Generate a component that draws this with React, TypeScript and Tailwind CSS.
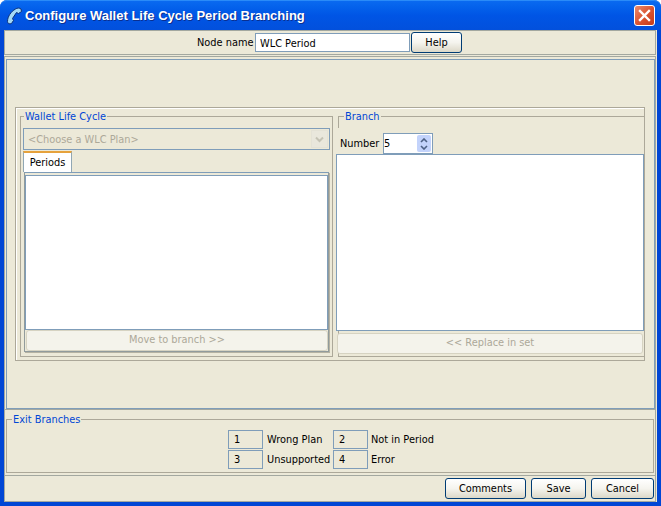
const ui = { fontFamily: '"DejaVu Sans", "Liberation Sans", sans-serif' }

const PushButton = ({ label, className }: { label: string; className: string }) => {
  return (
    <button className={"block h-[21px] rounded-[3px] border border-[#003c74] bg-gradient-to-b from-white via-[#f5f4ee] to-[#dcd8c8] pt-[2px] text-[9.8px] text-black " + className}>
      {label}
    </button>
  )
}

const DisabledButton = ({ label, className }: { label: string; className: string }) => {
  return (
    <button disabled className={"block h-[21px] rounded-[3px] border border-[#d6d3c2] bg-[#f4f3eb] text-[9.8px] text-[#aca899] " + className}>
      {label}
    </button>
  )
}

const Legend = ({ label, className }: { label: string; className: string }) => {
  return <legend className={"h-[14px] px-[1px] pt-[1px] text-[9.8px] leading-[14px] text-[#0046d5] " + className}>{label}</legend>
}

const ExitCell = ({ n }: { n: number }) => {
  return (
    <div className="flex h-[19px] w-[35px] items-center border border-[#7f9db9] pl-[5px] pt-[2px] text-[9.8px] text-black">{n}</div>
  )
}

const PhoneIcon = () => {
  return (
    <svg width="18" height="18" viewBox="0 0 18 18" className="shrink-0">
      <path
        d="M9.5 2 C11 0.8 14 0.8 15 2 L15.5 4.5 L12.5 6.5 L10.5 5.5 L6.5 11.5 L7.5 13.5 L5.5 16.5 C3.5 17.5 1.5 16.5 1.5 14.5 C1.5 9.5 5 4.5 9.5 2 Z"
        fill="#a4daf7"
        stroke="#0b2f7a"
        strokeWidth="1"
      />
    </svg>
  )
}

const CloseButton = () => {
  return (
    <div className="flex h-[21px] w-[21px] items-center justify-center rounded-[3px] border border-white bg-gradient-to-br from-[#e88a6c] via-[#db5532] to-[#c43a17]">
      <svg width="13" height="13" viewBox="0 0 13 13">
        <path d="M2 2 L11 11 M11 2 L2 11" stroke="#fff" strokeWidth="2.4" strokeLinecap="square" />
      </svg>
    </div>
  )
}

const App = () => {
  return (
    <div className="h-[506px] w-[661px] overflow-hidden bg-white" style={ui}>
      <div className="flex h-full flex-col rounded-t-[7px] bg-[#0046d5]">
        {/* title bar */}
        <div className="flex h-[30px] shrink-0 items-center rounded-t-[7px] border-t border-[#2a8bf8] bg-gradient-to-b from-[#0a6af0] via-[#0055e5] to-[#0250dc] pl-[6px] pr-[6px]">
          <PhoneIcon />
          <span className="ml-[1px] flex-1 text-[13px] font-bold text-white [font-family:'Liberation_Sans',sans-serif] [text-shadow:1px_1px_0_#0a2f90]">
            Configure Wallet Life Cycle Period Branching
          </span>
          <CloseButton />
        </div>

        <div className="mx-[4px] mb-[4px] flex flex-1 flex-col bg-[#ece9d8]">
          {/* node name */}
          <div className="flex h-[25px] w-[652px] shrink-0 items-center border border-[#a3a8a0]">
            <span className="ml-[192px] w-[55px] whitespace-nowrap pt-[1px] text-[9.8px] text-black">Node name</span>
            <input
              readOnly
              value="WLC Period"
              className="ml-[3px] h-[19px] w-[155px] border border-[#7f9db9] bg-white px-[4px] pt-[1px] text-[9.8px] text-black outline-none"
            />
            <PushButton label="Help" className="ml-[1px] w-[51px]" />
          </div>

          {/* main area */}
          <div className="mt-[1px] h-[353px] w-[652px] shrink-0 border-l border-r border-t border-[#a3a8a0] pl-[1px] pt-[2px]">
            <div className="h-[350px] w-[649px] border border-[#7f9db9] pl-[8px] pt-[47px]">
              <div className="flex h-[254px] w-[630px] border border-[#aca899] pl-[4px] pt-[1px] shadow-[inset_1px_1px_0_#fff]">
                <fieldset className="h-[248px] w-[313px] shrink-0 border border-[#aca899]">
                  <Legend label="Wallet Life Cycle" className="ml-[3px]" />
                  <div className="ml-[2px] mt-[5px] flex h-[22px] w-[307px] items-center border border-[#7f9db9] bg-[#ece9d8] pl-[4px] text-[9.8px] text-[#aca899]">
                    <span className="flex-1 pt-[2px]">&lt;Choose a WLC Plan&gt;</span>
                    <div className="mr-[1px] flex h-[18px] w-[17px] items-center justify-center border border-[#e4e2d6] bg-[#e9e7dc]">
                      <svg width="9" height="7" viewBox="0 0 9 7">
                        <path d="M1 1.5 L4.5 5 L8 1.5" fill="none" stroke="#c5c3b5" strokeWidth="2" />
                      </svg>
                    </div>
                  </div>
                  <div className="ml-[2px] mt-[1px] flex h-[21px] w-[49px] items-center justify-center border-x border-[#91a7b4] border-t-2 border-t-[#e6a23c] bg-white pt-[2px] text-[9.8px] text-black">
                    Periods
                  </div>
                  <div className="ml-[3px] h-[180px] w-[305px] border border-[#919b9c] border-t-[#7f9db9] pt-[2px] shadow-[1px_1px_0_#b5b2a2]">
                    <div className="h-[155px] w-[303px] border border-[#7f9db9] bg-white" />
                    <DisabledButton label="Move to branch >>" className="ml-[1px] w-[302px]" />
                  </div>
                </fieldset>

                <fieldset className="ml-[5px] h-[248px] w-[303px] shrink-0 border border-[#aca899]">
                  <Legend label="Branch" className="ml-[5px]" />
                  <div className="ml-[-1px] mt-[5px] flex h-[26px] items-center bg-[#ece9d8] pl-[2px] pt-[5px]">
                    <span className="w-[43px] whitespace-nowrap pt-[2px] text-[9.8px] text-black">Number</span>
                    <div className="flex h-[21px] w-[50px] items-center border border-[#7f9db9] bg-white text-[9.8px] text-black">
                      <span className="flex-1 pt-[2px]">5</span>
                      <div className="mr-[1px] flex h-[17px] w-[14px] flex-col items-center justify-center gap-[2px] rounded-[2px] bg-[#c3d3fb]">
                        <svg width="8" height="5" viewBox="0 0 8 5">
                          <path d="M1 4 L4 1 L7 4" fill="none" stroke="#4d6185" strokeWidth="1.6" />
                        </svg>
                        <svg width="8" height="5" viewBox="0 0 8 5">
                          <path d="M1 1 L4 4 L7 1" fill="none" stroke="#4d6185" strokeWidth="1.6" />
                        </svg>
                      </div>
                    </div>
                  </div>
                  <div className="ml-[-3px] h-[177px] w-[308px] border border-[#7f9db9] bg-white" />
                  <DisabledButton label="<< Replace in set" className="ml-[-2px] mt-[2px] w-[306px]" />
                </fieldset>
              </div>
            </div>
          </div>

          {/* exit branches */}
          <div className="h-[66px] w-[652px] shrink-0 border border-b-0 border-[#a3a8a0] pl-[1px] pt-[2px]">
            <fieldset className="h-[61px] w-[648px] border border-[#aca899]">
              <Legend label="Exit Branches" className="ml-[5px]" />
              <div className="ml-[221px] mt-[4px] grid w-[240px] grid-cols-[35px_70px_35px_1fr] items-center gap-y-[1px] text-[9.8px] text-black">
                <ExitCell n={1} />
                <span className="pl-[4px] pt-[2px]">Wrong Plan</span>
                <ExitCell n={2} />
                <span className="pl-[3px] pt-[2px]">Not in Period</span>
                <ExitCell n={3} />
                <span className="pl-[4px] pt-[2px]">Unsupported</span>
                <ExitCell n={4} />
                <span className="pl-[3px] pt-[2px]">Error</span>
              </div>
            </fieldset>
          </div>

          {/* bottom buttons */}
          <div className="flex h-[27px] w-[652px] shrink-0 items-center justify-end gap-[5px] border border-[#a3a8a0] pr-[1px]">
            <PushButton label="Comments" className="w-[81px]" />
            <PushButton label="Save" className="w-[55px]" />
            <PushButton label="Cancel" className="w-[63px]" />
          </div>
        </div>
      </div>
    </div>
  )
}
export default App
